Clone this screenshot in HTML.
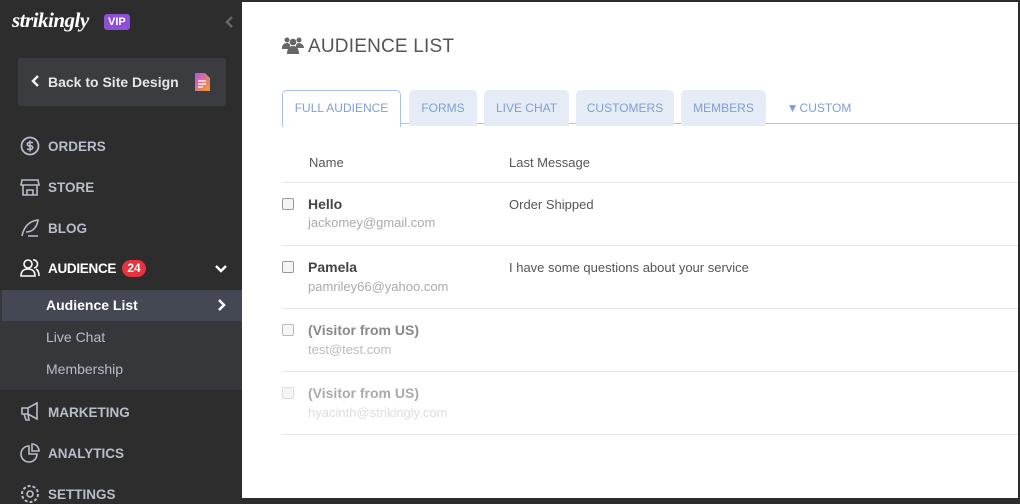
<!DOCTYPE html>
<html><head><style>
*{box-sizing:border-box;margin:0;padding:0}
body{width:1020px;height:500px;overflow:hidden;background:#2d2d2d;font-family:"Liberation Sans",sans-serif;position:relative}
.side{position:absolute;left:0;top:0;width:242px;height:500px;background:#2d2d2d}
.main{position:absolute;left:242px;top:2px;width:776px;height:496px;background:#fff}
.logo{position:absolute;left:12px;top:8px;color:#fff;font:italic bold 21px "Liberation Serif",serif;letter-spacing:-0.5px}
.vip{position:absolute;left:104px;top:14px;background:#8e4fd8;color:#fff;font-size:11px;font-weight:bold;padding:2px 4px;border-radius:3px}
.back{position:absolute;left:18px;top:58px;width:208px;height:48px;background:#3b3c40;border-radius:3px;color:#e6e6e6;font-size:14px;font-weight:bold;padding:16px 0 0 30px}
.nav{position:absolute;left:48px;color:#b9bdc9;font-size:13.5px;font-weight:bold}
.ic{position:absolute;left:20px}
.sub{position:absolute;left:0;top:290px;width:242px;height:100px;background:#36373b}
.tab{position:absolute;top:88px;height:36px;background:#e6ecf5;border-radius:5px 5px 0 0;color:#7e9fd6;font-size:12px;padding-top:11px;text-align:center}
.row{position:absolute;left:40px;width:736px;border-top:1px solid #e6e6e6}
.cb{position:absolute;left:40px;width:12px;height:12px;border:1px solid #999;border-radius:2px;background:#f5f5f5}
.nm{position:absolute;left:66px;font-size:14px;font-weight:bold;color:#444}
.em{position:absolute;left:66px;font-size:13px;color:#aaa}
.msg{position:absolute;left:267px;font-size:13px;color:#555}
</style></head><body>
<div class="side">
<div class="logo">strikingly</div><div class="vip">VIP</div>
<svg style="position:absolute;left:224px;top:15px" width="10" height="14"><path d="M8 2L3 7l5 5" stroke="#666" stroke-width="2.5" fill="none"/></svg>
<div class="back">Back to Site Design</div>
<svg style="position:absolute;left:30px;top:74px" width="10" height="14"><path d="M8 2L3 7l5 5" stroke="#eee" stroke-width="2.5" fill="none"/></svg>
<svg style="position:absolute;left:195px;top:73px" width="15" height="18"><defs><linearGradient id="g" x1="0" y1="0" x2="1" y2="1"><stop offset="0" stop-color="#b84ff0"/><stop offset="1" stop-color="#f7a11c"/></linearGradient></defs><path d="M0 0h10l5 5v13H0z" fill="url(#g)"/><path d="M3 8h8M3 11h8M3 14h5" stroke="#fff" stroke-width="1.3"/></svg>
<svg class="ic" style="top:136px" width="20" height="20"><circle cx="10" cy="10" r="8.5" stroke="#b9bdc9" stroke-width="1.8" fill="none"/><path d="M13 6.5h-4a1.7 1.7 0 0 0 0 3.4h2a1.7 1.7 0 0 1 0 3.4h-4M10 4.5v11" stroke="#b9bdc9" stroke-width="1.6" fill="none"/></svg>
<div class="nav" style="top:139px">ORDERS</div>
<svg class="ic" style="top:177px" width="20" height="20"><path d="M2 3h16l1 5H1zM3 8v10h14V8M7 18v-5h6v5" stroke="#b9bdc9" stroke-width="1.6" fill="none"/></svg>
<div class="nav" style="top:180px">STORE</div>
<svg class="ic" style="top:218px" width="20" height="20"><path d="M2 18C4 8 10 3 18 2c-1 7-5 12-12 12M8 18h10" stroke="#b9bdc9" stroke-width="1.6" fill="none"/></svg>
<div class="nav" style="top:221px">BLOG</div>
<svg class="ic" style="top:258px" width="20" height="20"><circle cx="8" cy="6" r="4" stroke="#fff" stroke-width="1.6" fill="none"/><path d="M1 18c0-5 3-7 7-7s7 2 7 7zM13 2a4 4 0 0 1 1 8M16 11c2 1 3 3 3 7" stroke="#fff" stroke-width="1.6" fill="none"/></svg>
<div class="nav" style="top:261px;color:#fff;letter-spacing:-0.3px">AUDIENCE</div>
<div style="position:absolute;left:122px;top:260px;width:24px;height:17px;border-radius:9px;background:#e5333f;color:#fff;font-size:12px;font-weight:bold;text-align:center;padding-top:1px">24</div>
<svg style="position:absolute;left:214px;top:264px" width="14" height="10"><path d="M2 2l5 5 5-5" stroke="#fff" stroke-width="2.5" fill="none"/></svg>
<div class="sub"></div>
<div style="position:absolute;left:2px;top:290px;width:240px;height:31px;background:#444852"></div>
<div class="nav" style="left:46px;top:297px;color:#fff;font-size:14px">Audience List</div>
<svg style="position:absolute;left:217px;top:298px" width="10" height="14"><path d="M2 2l5 5-5 5" stroke="#fff" stroke-width="2.5" fill="none"/></svg>
<div class="nav" style="left:46px;top:329px;font-weight:normal;font-size:14px">Live Chat</div>
<div class="nav" style="left:46px;top:361px;font-weight:normal;font-size:14px">Membership</div>
<svg class="ic" style="top:402px" width="20" height="20"><path d="M2 6h6l9-5v16l-9-5H2zM8 6v6M4 12l2 6h3l-1-6" stroke="#b9bdc9" stroke-width="1.6" fill="none"/></svg>
<div class="nav" style="top:405px">MARKETING</div>
<svg class="ic" style="top:443px" width="20" height="20"><path d="M9 3a8 8 0 1 0 8 8H9z" stroke="#b9bdc9" stroke-width="1.6" fill="none"/><path d="M12 1v7h7a7 7 0 0 0-7-7z" stroke="#b9bdc9" stroke-width="1.6" fill="none"/></svg>
<div class="nav" style="top:446px">ANALYTICS</div>
<svg class="ic" style="top:484px" width="20" height="20"><circle cx="10" cy="10" r="3" stroke="#b9bdc9" stroke-width="1.6" fill="none"/><circle cx="10" cy="10" r="8" stroke="#b9bdc9" stroke-width="2" stroke-dasharray="3 2" fill="none"/></svg>
<div class="nav" style="top:487px">SETTINGS</div>
</div>
<div class="main">
<svg style="position:absolute;left:40px;top:35px" width="22" height="17"><circle cx="5" cy="3" r="2.5" fill="#666"/><circle cx="17" cy="3" r="2.5" fill="#666"/><circle cx="11" cy="5" r="3.3" fill="#666"/><path d="M0 11c0-3 2-5 5-5s3 2 3 2v4H0zM14 8s1-2 3-2 5 2 5 5h-8zM5 17c0-5 2-8 6-8s6 3 6 8z" fill="#666"/></svg>
<div style="position:absolute;left:66px;top:34px;font-size:19px;color:#555;letter-spacing:0.2px">AUDIENCE LIST</div>
<div style="position:absolute;left:40px;top:121px;width:736px;border-top:1px solid #a9bfe3"></div>
<div class="tab" style="left:40px;width:119px;background:#fff;border:1px solid #a9bfe3;border-bottom:none;height:37px;padding-top:10px">FULL AUDIENCE</div>
<div class="tab" style="left:167px;width:68px">FORMS</div>
<div class="tab" style="left:242px;width:85px">LIVE CHAT</div>
<div class="tab" style="left:334px;width:98px">CUSTOMERS</div>
<div class="tab" style="left:439px;width:85px">MEMBERS</div>
<div class="tab" style="left:532px;width:90px;background:none">&#9660;&#8202;CUSTOM</div>
<div style="position:absolute;left:67px;top:153px;font-size:13px;color:#555">Name</div>
<div style="position:absolute;left:267px;top:153px;font-size:13px;color:#555">Last Message</div>
<div class="row" style="top:180px"></div>
<div class="cb" style="top:196px"></div><div class="nm" style="top:194px">Hello</div><div class="em" style="top:213px">jackomey@gmail.com</div><div class="msg" style="top:195px">Order Shipped</div>
<div class="row" style="top:243px"></div>
<div class="cb" style="top:259px"></div><div class="nm" style="top:257px">Pamela</div><div class="em" style="top:277px">pamriley66@yahoo.com</div><div class="msg" style="top:258px">I have some questions about your service</div>
<div class="row" style="top:306px"></div>
<div class="cb" style="top:322px;border-color:#bbb"></div><div class="nm" style="top:320px;color:#888">(Visitor from US)</div><div class="em" style="top:340px;color:#bbb">test@test.com</div>
<div class="row" style="top:369px"></div>
<div class="cb" style="top:385px;border-color:#ddd"></div><div class="nm" style="top:383px;color:#aaa">(Visitor from US)</div><div class="em" style="top:403px;color:#ddd">hyacinth@strikingly.com</div>
<div class="row" style="top:432px"></div>
</div>
</body></html>
